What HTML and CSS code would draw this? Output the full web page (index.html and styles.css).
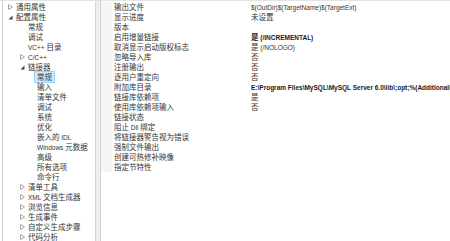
FILE: index.html
```html
<!DOCTYPE html>
<html lang="zh-CN">
<head>
<meta charset="utf-8">
<link rel="stylesheet" href="styles.css">
</head>
<body>
<div class="window">
  <div class="tree">
    <div class="row l0"><span class="tw"><svg width="5" height="6" viewBox="0 0 5 6"><path d="M0.5 0.5 L4.5 3 L0.5 5.5 Z" fill="#fff" stroke="#a6a6a6"/></svg></span><span class="lb">通用属性</span></div>
    <div class="row l0"><span class="tw"><svg width="5" height="5" viewBox="0 0 5 5"><path d="M4.5 0.5 L4.5 4.5 L0.5 4.5 Z" fill="#404040"/></svg></span><span class="lb">配置属性</span></div>
    <div class="row l1"><span class="tw"></span><span class="lb">常规</span></div>
    <div class="row l1"><span class="tw"></span><span class="lb">调试</span></div>
    <div class="row l1"><span class="tw"></span><span class="lb"><span class="en">VC++ </span>目录</span></div>
    <div class="row l1"><span class="tw"><svg width="5" height="6" viewBox="0 0 5 6"><path d="M0.5 0.5 L4.5 3 L0.5 5.5 Z" fill="#fff" stroke="#a6a6a6"/></svg></span><span class="lb"><span class="en">C/C++</span></span></div>
    <div class="row l1"><span class="tw"><svg width="5" height="5" viewBox="0 0 5 5"><path d="M4.5 0.5 L4.5 4.5 L0.5 4.5 Z" fill="#404040"/></svg></span><span class="lb">链接器</span></div>
    <div class="row l2"><span class="tw"></span><span class="lb sel">常规</span></div>
    <div class="row l2"><span class="tw"></span><span class="lb">输入</span></div>
    <div class="row l2"><span class="tw"></span><span class="lb">清单文件</span></div>
    <div class="row l2"><span class="tw"></span><span class="lb">调试</span></div>
    <div class="row l2"><span class="tw"></span><span class="lb">系统</span></div>
    <div class="row l2"><span class="tw"></span><span class="lb">优化</span></div>
    <div class="row l2"><span class="tw"></span><span class="lb">嵌入的<span class="en"> IDL</span></span></div>
    <div class="row l2"><span class="tw"></span><span class="lb"><span class="en">Windows </span>元数据</span></div>
    <div class="row l2"><span class="tw"></span><span class="lb">高级</span></div>
    <div class="row l2"><span class="tw"></span><span class="lb">所有选项</span></div>
    <div class="row l2"><span class="tw"></span><span class="lb">命令行</span></div>
    <div class="row l1"><span class="tw"><svg width="5" height="6" viewBox="0 0 5 6"><path d="M0.5 0.5 L4.5 3 L0.5 5.5 Z" fill="#fff" stroke="#a6a6a6"/></svg></span><span class="lb">清单工具</span></div>
    <div class="row l1"><span class="tw"><svg width="5" height="6" viewBox="0 0 5 6"><path d="M0.5 0.5 L4.5 3 L0.5 5.5 Z" fill="#fff" stroke="#a6a6a6"/></svg></span><span class="lb"><span class="en">XML </span>文档生成器</span></div>
    <div class="row l1"><span class="tw"><svg width="5" height="6" viewBox="0 0 5 6"><path d="M0.5 0.5 L4.5 3 L0.5 5.5 Z" fill="#fff" stroke="#a6a6a6"/></svg></span><span class="lb">浏览信息</span></div>
    <div class="row l1"><span class="tw"><svg width="5" height="6" viewBox="0 0 5 6"><path d="M0.5 0.5 L4.5 3 L0.5 5.5 Z" fill="#fff" stroke="#a6a6a6"/></svg></span><span class="lb">生成事件</span></div>
    <div class="row l1"><span class="tw"><svg width="5" height="6" viewBox="0 0 5 6"><path d="M0.5 0.5 L4.5 3 L0.5 5.5 Z" fill="#fff" stroke="#a6a6a6"/></svg></span><span class="lb">自定义生成步骤</span></div>
    <div class="row l1"><span class="tw"><svg width="5" height="6" viewBox="0 0 5 6"><path d="M0.5 0.5 L4.5 3 L0.5 5.5 Z" fill="#fff" stroke="#a6a6a6"/></svg></span><span class="lb">代码分析</span></div>
  </div>
  <div class="splitter"></div>
  <div class="grid">
    <div class="props">
      <div class="prow"><span class="name">输出文件</span><span class="val"><span class="en">$(OutDir)$(TargetName)$(TargetExt)</span></span></div>
      <div class="prow"><span class="name">显示进度</span><span class="val">未设置</span></div>
      <div class="prow"><span class="name">版本</span><span class="val"></span></div>
      <div class="prow"><span class="name">启用增量链接</span><span class="val b">是<span class="en"> (/INCREMENTAL)</span></span></div>
      <div class="prow"><span class="name">取消显示启动版权标志</span><span class="val">是<span class="en"> (/NOLOGO)</span></span></div>
      <div class="prow"><span class="name">忽略导入库</span><span class="val">否</span></div>
      <div class="prow"><span class="name">注册输出</span><span class="val">否</span></div>
      <div class="prow"><span class="name">逐用户重定向</span><span class="val">否</span></div>
      <div class="prow"><span class="name">附加库目录</span><span class="val b"><span class="en">E:\Program Files\MySQL\MySQL Server 6.0\lib\;opt;%(AdditionalLibraryDirectories)</span></span></div>
      <div class="prow"><span class="name">链接库依赖项</span><span class="val">是</span></div>
      <div class="prow"><span class="name">使用库依赖项输入</span><span class="val">否</span></div>
      <div class="prow"><span class="name">链接状态</span><span class="val"></span></div>
      <div class="prow"><span class="name">阻止<span class="en"> Dll </span>绑定</span><span class="val"></span></div>
      <div class="prow"><span class="name">将链接器警告视为错误</span><span class="val"></span></div>
      <div class="prow"><span class="name">强制文件输出</span><span class="val"></span></div>
      <div class="prow"><span class="name">创建可热修补映像</span><span class="val"></span></div>
      <div class="prow"><span class="name">指定节特性</span><span class="val"></span></div>
    </div>
  </div>
</div>
</body>
</html>
```

FILE: styles.css
```css
html, body {
  margin: 0;
  padding: 0;
  background: #ffffff;
}
body {
  font-family: "Noto Sans CJK SC", "Noto Sans", sans-serif;
  font-size: 7.5px;
  color: #333333;
  width: 450px;
  height: 241px;
  overflow: hidden;
}
.en {
  font-family: "Liberation Sans", "Noto Sans CJK SC", sans-serif;
  font-size: 6.5px;
}
.window {
  display: flex;
  height: 241px;
  border-top: 1px solid #e3e3e3;
  box-sizing: border-box;
  padding-left: 2px;
}
.tree {
  width: 94px;
  flex: none;
  border-left: 1px solid #cfcfcf;
  border-right: 1px solid #d4d4d4;
  box-sizing: border-box;
  padding-top: 1px;
  overflow: hidden;
}
.row {
  display: flex;
  align-items: center;
  height: 10px;
  line-height: 10px;
  white-space: nowrap;
}
.l0 { padding-left: 5px; }
.l1 { padding-left: 17px; }
.l2 { padding-left: 26px; }
.tw {
  width: 6px;
  flex: none;
  display: flex;
  align-items: center;
}
.tw svg { display: block; }
.lb {
  padding: 0 2px;
  height: 10px;
  box-sizing: border-box;
}
.lb.sel {
  background: #cce8ff;
  outline: 1px solid #99d1ff;
}
.splitter {
  width: 4px;
  flex: none;
  background: #eeeeee;
  border-right: 1px solid #d4d4d4;
}
.grid {
  flex: 1;
  min-width: 0;
  overflow: hidden;
  padding-top: 1px;
}
.props {
  border-left: 11px solid #f5f5f5;
}
.prow {
  display: flex;
  height: 10px;
  line-height: 10px;
  white-space: nowrap;
}
.name {
  width: 135px;
  flex: none;
  padding-left: 2px;
  overflow: hidden;
}
.val {
  flex: 1;
  min-width: 0;
  overflow: hidden;
  padding-left: 2px;
}
.val.b {
  font-weight: bold;
  color: #1a1a1a;
}
```
